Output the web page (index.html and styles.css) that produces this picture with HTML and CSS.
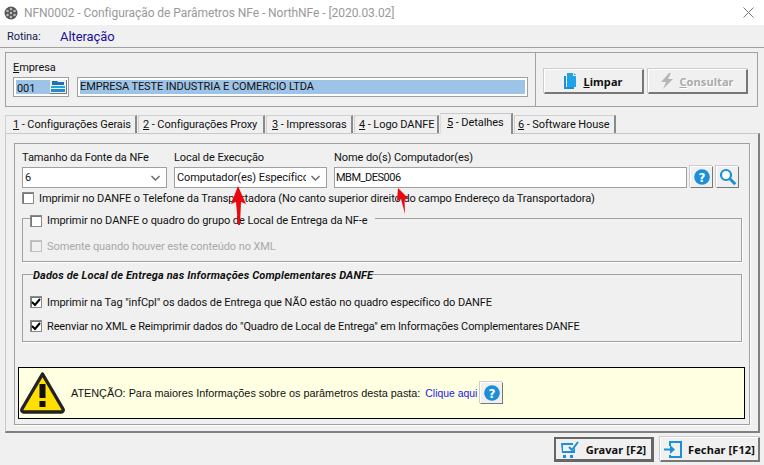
FILE: index.html
```html
<!DOCTYPE html>
<html lang="pt-BR">
<head>
	<meta charset="UTF-8">
	<title>NFN0002 - Configuração de Parâmetros NFe</title>
	<link rel="stylesheet" href="styles.css">
</head>
<body>
	<div class="titlebar">
		<svg class="app-icon" width="14" height="14" viewBox="0 0 14 14"><circle cx="7" cy="7" r="6.5" fill="#555"/><circle cx="7" cy="7" r="1.3" fill="#bbb"/><circle cx="7" cy="3" r="1.3" fill="#bbb"/><circle cx="7" cy="11" r="1.3" fill="#bbb"/><circle cx="3.5" cy="5" r="1.3" fill="#bbb"/><circle cx="10.5" cy="5" r="1.3" fill="#bbb"/><circle cx="3.5" cy="9" r="1.3" fill="#bbb"/><circle cx="10.5" cy="9" r="1.3" fill="#bbb"/></svg>
		<span class="title">NFN0002 - Configuração de Parâmetros NFe - NorthNFe - [2020.03.02]</span>
		<svg class="close" width="11" height="11" viewBox="0 0 11 11"><path d="M.5.5l10 10M10.5.5l-10 10" stroke="#777" fill="none"/></svg>
	</div>
	<div class="rotina">
		<span class="rotina-label">Rotina:</span>
		<span class="rotina-value">Alteração</span>
	</div>

	<div class="top">
		<div class="empresa">
			<div class="empresa-label"><u>E</u>mpresa</div>
			<div class="empresa-row">
				<div class="codigo">
					<span class="codigo-text">001</span>
					<span class="codigo-btn">
						<svg width="14" height="12" viewBox="0 0 14 12"><path d="M1 0h5l1 1h6v3H1z" fill="#1b75b5"/><path d="M0 5h14v2H0z" fill="#29a3e0"/><path d="M0 8h14v3H0z" fill="#1b8fd0"/></svg>
					</span>
				</div>
				<div class="razao"><span>EMPRESA TESTE INDUSTRIA E COMERCIO LTDA</span></div>
			</div>
		</div>
		<div class="acoes">
			<div class="btn btn-bold">
				<svg width="13" height="16" viewBox="0 0 13 16"><path d="M0 3h2v11h8v2H0z" fill="#1b8fd8"/><path d="M3 0h6v3h3v11H3z" fill="#1fa3e6"/><path d="M10 0l2 2h-2z" fill="#1fa3e6"/></svg>
				<span><u>L</u>impar</span>
			</div>
			<div class="btn btn-bold btn-off">
				<svg width="12" height="16" viewBox="0 0 12 16"><path d="M8 0L0 9h5l-3 7 10-10H7l3-6z" fill="#b5b5b5"/></svg>
				<span><u>C</u>onsultar</span>
			</div>
		</div>
	</div>

	<div class="tabs">
		<div class="tab tab-1"><u>1</u> - Configurações Gerais</div>
		<div class="tab tab-2"><u>2</u> - Configurações Proxy</div>
		<div class="tab tab-3"><u>3</u> - Impressoras</div>
		<div class="tab tab-4"><u>4</u> - Logo DANFE</div>
		<div class="tab tab-5 active"><u>5</u> - Detalhes</div>
		<div class="tab tab-6"><u>6</u> - Software House</div>
	</div>

	<div class="page">
		<div class="inner">
			<div class="fields">
				<div class="field field-fonte">
					<div class="field-label">Tamanho da Fonte da NFe</div>
					<div class="input select"><span class="value">6</span><svg class="chev" width="9" height="6" viewBox="0 0 9 6"><path d="M.5 1l4 4 4-4" stroke="#666" stroke-width="1.4" fill="none"/></svg></div>
				</div>
				<div class="field field-local">
					<div class="field-label">Local de Execução</div>
					<div class="input select"><span class="value">Computador(es) Específicos</span><svg class="chev" width="9" height="6" viewBox="0 0 9 6"><path d="M.5 1l4 4 4-4" stroke="#666" stroke-width="1.4" fill="none"/></svg></div>
				</div>
				<div class="field field-nome">
					<div class="field-label">Nome do(s) Computador(es)</div>
					<div class="input input-nome"><span class="value">MBM_DES006</span></div>
				</div>
				<div class="tool">
					<svg width="16" height="16" viewBox="0 0 16 16"><circle cx="8" cy="8" r="7.8" fill="#1b8fd8"/><text x="8" y="12.5" class="help-mark">?</text></svg>
				</div>
				<div class="tool">
					<svg width="18" height="18" viewBox="0 0 18 18"><circle cx="7" cy="7" r="5" fill="#fff" stroke="#1b8fd8" stroke-width="2.2"/><path d="M10.8 10.8l5.5 5.5" stroke="#1b8fd8" stroke-width="3"/></svg>
				</div>
			</div>

			<label class="check-row check-fone"><span class="box"></span>Imprimir no DANFE o Telefone da Transportadora (No canto superior direito do campo Endereço da Transportadora)</label>

			<fieldset class="group group-quadro">
				<legend class="legend-check"><span class="box"></span>Imprimir no DANFE o quadro do grupo de Local de Entrega da NF-e</legend>
				<div class="check-row disabled"><span class="box"></span>Somente quando houver este conteúdo no XML</div>
			</fieldset>

			<fieldset class="group group-dados">
				<legend class="legend-bold">Dados de Local de Entrega nas Informações Complementares DANFE</legend>
				<div class="check-row"><span class="box checked"><svg width="10" height="9" viewBox="0 0 10 9"><path d="M1 4l3 3 5-6" stroke="#000" stroke-width="2" fill="none"/></svg></span>Imprimir na Tag "infCpl" os dados de Entrega que NÃO estão no quadro específico do DANFE</div>
				<div class="check-row check-reenviar"><span class="box checked"><svg width="10" height="9" viewBox="0 0 10 9"><path d="M1 4l3 3 5-6" stroke="#000" stroke-width="2" fill="none"/></svg></span>Reenviar no XML e Reimprimir dados do "Quadro de Local de Entrega" em Informações Complementares DANFE</div>
			</fieldset>

			<div class="aviso">
				<svg class="aviso-icon" width="47" height="44" viewBox="0 0 47 44"><path d="M23.5 3L44 38a2 2 0 0 1-2 3H5a2 2 0 0 1-2-3z" fill="#ffdf00" stroke="#222" stroke-width="3.4" stroke-linejoin="round"/><path d="M20.5 13h6v14h-6zM20.5 30h6v6h-6z" fill="#111"/></svg>
				<span class="aviso-text">ATENÇÃO: Para maiores Informações sobre os parâmetros desta pasta:</span>
				<span class="aviso-link">Clique aqui</span>
				<div class="tool tool-aviso">
					<svg width="16" height="16" viewBox="0 0 16 16"><circle cx="8" cy="8" r="7.8" fill="#1b8fd8"/><text x="8" y="12.5" class="help-mark">?</text></svg>
				</div>
			</div>
		</div>
	</div>

	<div class="rodape">
		<div class="btn btn-bold btn-default">
			<svg width="19" height="17" viewBox="0 0 19 17"><path d="M0 2h12v2H2v6h10l2-4v6H1z" fill="#1b8fd8"/><path d="M2 14h3v3H2zM9 14h3v3H9z" fill="#1b8fd8"/><path d="M8 6l3 3 6-8" stroke="#1b8fd8" stroke-width="2" fill="none"/></svg>
			<span>Gravar [F2]</span>
		</div>
		<div class="btn btn-bold">
			<svg width="18" height="17" viewBox="0 0 18 17"><path d="M5 5V0h13v17H5v-3h2v1h9V2H7v3z" fill="#1b8fd8"/><path d="M0 7.5h6V4l5 4.5L6 13V9.500H0z" fill="#1b8fd8"/></svg>
			<span>Fechar [F12]</span>
		</div>
	</div>

	<svg class="seta seta-1" width="16" height="40" viewBox="0 0 16 40"><path d="M7 0L15 18 10 16 9 39 7 39 5 16 0 18z" fill="#e8090f"/></svg>
	<svg class="seta seta-2" width="14" height="27" viewBox="0 0 14 27"><path d="M2 0L13 11 8.500 11 9 26 5 11 1 13z" fill="#e8090f"/></svg>
</body>
</html>
```

FILE: styles.css
```css
*{
	margin:0px;
	padding:0px;
	box-sizing:border-box;
}
body{
	width:764px;
	height:465px;
	position:relative;
	overflow:hidden;
	background:#f0f0f0;
	color:#111;
	font:11px Roboto,"Liberation Sans",sans-serif;
	letter-spacing:-.08px;
}

/* barra de titulo */
.titlebar{
	height:25px;
	background:#fff;
	display:flex;
	align-items:center;
	padding:0 10px 0 4px;
}
.title{
	margin-left:6px;
	color:#999;
	font-size:12px;
	letter-spacing:-.06px;
	flex:1;
	white-space:nowrap;
}
.rotina{
	height:23px;
	display:flex;
	align-items:center;
	padding-left:7px;
	border-bottom:1px solid #a0a0a0;
}
.rotina-label{
	width:53px;
	color:#102050;
}
.rotina-value{
	color:#1a0f9c;
	font-size:13px;
}

/* empresa + limpar/consultar */
.top{
	display:flex;
	height:55px;
	margin:4px 6px 0 5px;
	border:1px solid #a0a0a0;
}
.empresa{
	width:530px;
	padding:8px 0 0 7px;
	border-right:1px solid #a0a0a0;
}
.empresa-label{
	height:16px;
	line-height:13px;
}
.empresa-row{
	display:flex;
	gap:8px;
}
.codigo{
	width:56px;
	height:20px;
	border:1px solid #a0a0a0;
	background:#fff;
	padding:2px 1px 2px 2px;
	display:flex;
}
.codigo-text{
	width:34px;
	background:#9dc3e6;
	padding-left:1px;
	line-height:17px;
}
.codigo-btn{
	flex:1;
	display:flex;
	align-items:center;
	justify-content:center;
	background:#f0f0f0;
	border-right:1px solid #777;
	border-bottom:1px solid #777;
}
.razao{
	width:451px;
	height:20px;
	border:1px solid #a0a0a0;
	background:#fff;
	padding:2px;
}
.razao span{
	display:block;
	height:14px;
	background:#9dc3e6;
	line-height:13px;
	white-space:nowrap;
}
.acoes{
	flex:1;
	display:flex;
	gap:4px;
	padding:16px 0 0 8px;
}
.btn{
	width:100px;
	height:25px;
	display:flex;
	align-items:center;
	justify-content:center;
	gap:6px;
	background:#f0f0f0;
	border:1px solid #fff;
	border-right:2px solid #777;
	border-bottom:2px solid #777;
	box-shadow:-1px -1px 0 #ccc;
	white-space:nowrap;
}
.btn-bold{
	font-family:"Noto Sans",sans-serif;
	font-size:11px;
	font-weight:bold;
	letter-spacing:.1px;
	color:#111;
}
.btn-off{
	color:#aaa;
	text-shadow:1px 1px 0 #fff;
}
.btn-default{
	border:2px solid #666;
	border-right-width:3px;
	border-bottom-width:3px;
	box-shadow:none;
}

/* abas */
.tabs{
	display:flex;
	align-items:flex-end;
	height:21px;
	margin:6px 0 0 5px;
	position:relative;
	z-index:1;
}
.tab{
	height:18px;
	margin-bottom:1px;
	padding:1px 0 0 4px;
	margin-right:1px;
	line-height:15px;
	background:#f0f0f0;
	border:1px solid #d0d0d0;
	border-bottom:none;
	border-right:2px solid #8a8a8a;
	white-space:nowrap;
}
.tab-1{width:132px; padding-left:7px;}
.tab-2{width:127px;}
.tab-3{width:87px; padding-left:5px;}
.tab-4{width:85px;}
.tab-5{width:73px; padding-left:6px;}
.tab-6{width:102px; padding-left:3px;}
.active{
	height:21px;
	margin-bottom:0;
	padding-top:1px;
	border-top:1px solid #c8c8c8;
	border-left:1px solid #ddd;
	background:#f0f0f0;
}
.page{
	width:755px;
	height:300px;
	margin:-1px 0 0 5px;
	padding:9px 9px 0 9px;
	border-top:1px solid #c8c8c8;
	border-left:1px solid #c8c8c8;
	border-right:2px solid #808080;
	border-bottom:2px solid #808080;
}
.inner{
	width:736px;
	height:282px;
	margin-left:-1px;
	padding:8px 0 0 7px;
	border:1px solid #a0a0a0;
	box-shadow:1px 1px 0 #fff;
	position:relative;
}

/* campos */
.fields{
	display:flex;
	align-items:flex-end;
}
.field-label{
	height:15px;
	line-height:12px;
	white-space:nowrap;
}
.field-fonte{width:145px; margin-right:7px;}
.field-local{width:153px; margin-right:7px;}
.field-nome{width:353px; margin-right:3px;}
.input{
	height:21px;
	display:flex;
	align-items:center;
	background:#fff;
	border:1px solid #a0a0a0;
	padding:0 3px 0 2px;
	overflow:hidden;
}
.input-nome{
	padding-left:1px;
	letter-spacing:-.5px;
}
.value{
	flex:1;
	white-space:nowrap;
	overflow:hidden;
}
.chev{
	flex:none;
	margin:0 3px 0 5px;
}
.tool{
	width:23px;
	height:22px;
	margin-right:3px;
	display:flex;
	align-items:center;
	justify-content:center;
	background:#f0f0f0;
	border:1px solid #fff;
	border-right:1px solid #777;
	border-bottom:1px solid #777;
	box-shadow:-1px -1px 0 #ccc;
}
.help-mark{
	font-family:"DejaVu Sans",sans-serif;
	font-size:12px;
	font-weight:bold;
	fill:#fff;
	text-anchor:middle;
}

/* checkboxes */
.box{
	flex:none;
	width:12px;
	height:12px;
	margin-right:5px;
	display:inline-flex;
	align-items:center;
	justify-content:center;
	background:#fff;
	border:1px solid #8a8a8a;
	box-shadow:inset 1px 1px 0 #777;
}
.check-row{
	display:flex;
	align-items:center;
	height:16px;
	white-space:nowrap;
}
.check-fone{
	margin-top:2px;
}
.disabled{
	color:#a8a8a8;
}
.disabled .box{
	background:#f0f0f0;
	border-color:#c0c0c0;
	box-shadow:inset 1px 1px 0 #bbb;
}

/* grupos */
.group{
	width:720px;
	border:1px solid #a0a0a0;
	box-shadow:1px 1px 0 #fff;
	padding:0 0 0 7px;
}
.group-quadro{
	height:52px;
	margin-top:4px;
}
.group-quadro .check-row{
	margin-top:11px;
}
.group-dados{
	height:76px;
	margin-top:4px;
}
.group-dados .check-row{
	height:24px;
}
.group-dados .check-row:first-of-type{
	margin-top:8px;
}
.check-reenviar{
	letter-spacing:-.14px;
}
.legend-check{
	display:flex;
	align-items:center;
	padding:4px 7px 0 0;
	white-space:nowrap;
}
.legend-bold{
	margin-left:3px;
	padding-top:3px;
	font-weight:bold;
	font-style:italic;
	letter-spacing:.14px;
	white-space:nowrap;
}

/* aviso */
.aviso{
	position:relative;
	left:-4px;
	width:727px;
	height:52px;
	margin-top:25px;
	display:flex;
	align-items:center;
	background:#ffffe1;
	border:1px solid #000;
	font-family:"Liberation Sans",sans-serif;
	font-size:10.85px;
	letter-spacing:0;
}
.aviso-icon{
	margin-left:0px;
	margin-right:5px;
}
.aviso-link{
	margin-left:5px;
	font-size:10.4px;
	color:#1a1ae6;
}
.tool-aviso{
	margin-left:3px;
}

/* rodape */
.rodape{
	display:flex;
	justify-content:flex-end;
	gap:6px;
	margin-top:4px;
	padding-right:4px;
}

/* setas vermelhas desenhadas por cima da tela */
.seta{
	position:absolute;
}
.seta-1{
	left:231px;
	top:186px;
}
.seta-2{
	left:396px;
	top:188px;
}
```
